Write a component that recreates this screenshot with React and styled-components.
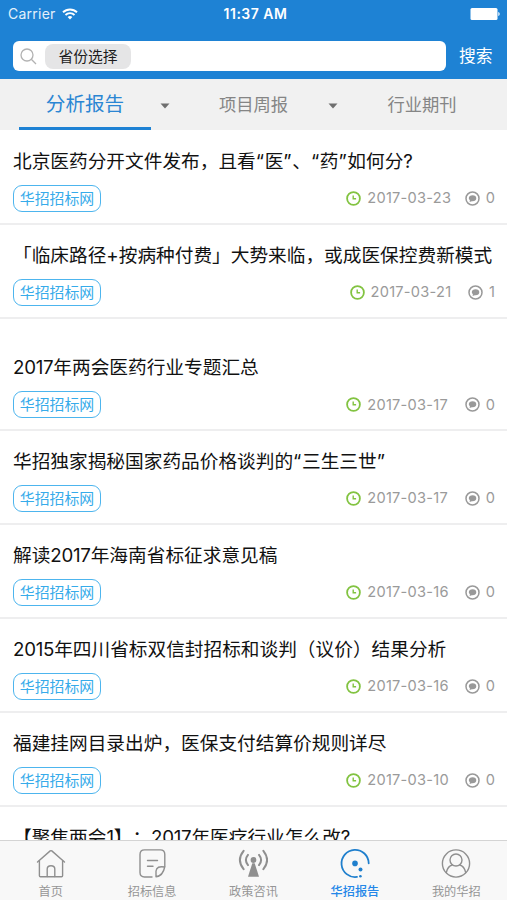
import React from 'react';
import styled, { createGlobalStyle } from 'styled-components';

const GlobalStyle = createGlobalStyle`
  * { box-sizing: border-box; }
  html, body { margin: 0; padding: 0; }
  body {
    font-family: Inter, "Noto Sans CJK SC", sans-serif;
    background: #fff;
    overflow: hidden;
  }
  svg { display: block; flex: none; }
`;

const Screen = styled.div`
  width: 507px;
  height: 900px;
  display: flex;
  flex-direction: column;
  overflow: hidden;
  background: #fff;
`;

const Header = styled.header`
  flex: none;
  height: 79px;
  background: #1e82d4;
  color: #fff;
`;

const StatusBar = styled.div`
  height: 28px;
  padding: 0 7px 0 8px;
  display: grid;
  grid-template-columns: 1fr auto 1fr;
  align-items: center;
  line-height: 28px;
`;

const Carrier = styled.div`
  display: flex;
  align-items: center;
  gap: 6px;
  font-size: 14px;
  letter-spacing: 0.25px;
  color: #e3f0fb;
`;

const Clock = styled.div`
  font-size: 14px;
  font-weight: 600;
  letter-spacing: 0.5px;
  padding-left: 3px;
`;

const BatterySlot = styled.div`
  justify-self: end;
`;

const SearchRow = styled.div`
  display: flex;
  align-items: center;
  height: 30px;
  margin-top: 13px;
  padding: 0 13px;
`;

const SearchField = styled.div`
  display: flex;
  align-items: center;
  gap: 8px;
  width: 433px;
  height: 30px;
  padding-left: 7px;
  border-radius: 6px;
  background: #fff;
`;

const Province = styled.div`
  width: 86px;
  height: 25px;
  border-radius: 8px;
  background: #e5e5e6;
  color: #1c1c1c;
  font-size: 14.8px;
  line-height: 26px;
  text-align: center;
`;

const SearchButton = styled.div`
  margin-left: 13px;
  font-size: 16.8px;
  line-height: 32px;
  white-space: nowrap;
`;

const Tabs = styled.nav`
  flex: none;
  display: flex;
  height: 51px;
  padding-left: 19px;
  background: #f1f1f1;
`;

const Tab = styled.div`
  flex: none;
  width: 132px;
  height: 51px;
  margin-right: 36.5px;
  text-align: center;
  line-height: 51px;
  font-size: ${(p) => (p.$active ? 19.6 : 17.3)}px;
  color: ${(p) => (p.$active ? '#2b86d3' : '#858585')};
  border-bottom: 3px solid ${(p) => (p.$active ? '#1e82d4' : 'transparent')};
  position: relative;
`;

const Caret = styled.svg`
  position: absolute;
  left: 140.5px;
  top: 24px;
`;

const List = styled.main`
  flex: 1;
  min-height: 0;
  padding-top: 1px;
  overflow: hidden;
`;

const Row = styled.article`
  height: ${(p) => (p.$spaced ? 112 : 94)}px;
  padding: ${(p) => (p.$spaced ? 35 : 16.5)}px 12px 0 13px;
  border-bottom: 2px solid #eeeeef;
`;

const Title = styled.h2`
  margin: 0;
  height: 28px;
  line-height: 28px;
  font-size: 18.68px;
  font-weight: 400;
  color: #111;
  white-space: nowrap;
  font-kerning: none;
  text-spacing-trim: space-all;
  font-feature-settings: "kern" 0, "calt" 0, "chws" 0;
`;

const Latin = styled.span`
  letter-spacing: ${(p) => p.$track || 0}px;
`;

const Meta = styled.div`
  display: flex;
  align-items: center;
  justify-content: space-between;
  height: 27px;
  margin-top: 9px;
`;

const Tag = styled.span`
  width: 88px;
  height: 27px;
  border: 1.5px solid #4db5ee;
  border-radius: 9px;
  color: #36abea;
  font-size: 14.9px;
  line-height: 26px;
  text-align: center;
`;

const Info = styled.div`
  display: flex;
  align-items: center;
  font-size: 14.6px;
  color: #9a9a9a;
  white-space: nowrap;
`;

const DateText = styled.span`
  width: 84px;
  margin: 0 13.5px 0 6px;
  letter-spacing: 0.25px;
`;

const Count = styled.span`
  margin-left: 6px;
`;

const BottomBar = styled.nav`
  flex: none;
  display: grid;
  grid-template-columns: repeat(5, 1fr);
  height: 60px;
  background: #f8f8f8;
  border-top: 1px solid #d4d4d4;
`;

const NavItem = styled.div`
  display: flex;
  flex-direction: column;
  align-items: center;
  padding-top: 7px;
  font-size: 12.2px;
  line-height: 18px;
  font-weight: ${(p) => (p.$active ? 500 : 400)};
  color: ${(p) => (p.$active ? '#2487e8' : '#969696')};
  svg { margin-bottom: 4px; }
`;

const WifiIcon = () => (
  <svg width="16" height="12" viewBox="0 0 16 12" fill="none" stroke="#fff" strokeWidth="1.9">
    <path d="M1 4.3a10 10 0 0 1 14 0" />
    <path d="M3.5 7a6.3 6.3 0 0 1 9 0" />
    <path d="M5.6 9.1a3.5 3.5 0 0 1 4.8 0L8 11.6z" fill="#fff" stroke="none" />
  </svg>
);

const BatteryIcon = () => (
  <svg width="30" height="12" viewBox="0 0 30 12" fill="#fff">
    <rect x=".5" width="27" height="12" rx="1.5" />
    <path d="M28.300 4c1.800.5 1.800 3.500 0 4z" />
  </svg>
);

const SearchIcon = () => (
  <svg width="17" height="17" viewBox="0 0 17 17" fill="none" stroke="#b2b2b2" strokeWidth="1.3">
    <circle cx="7" cy="7" r="6" />
    <path d="M11.300 11.300 16 16" />
  </svg>
);

const ClockIcon = () => (
  <svg width="15" height="15" viewBox="0 0 15 15" fill="none" stroke="#82c341">
    <circle cx="7.500" cy="7.500" r="6.400" strokeWidth="1.8" />
    <path d="M7.200 4.500v3.300h2.900" strokeWidth="1.4" />
  </svg>
);

const CommentIcon = () => (
  <svg width="15" height="15" viewBox="0 0 15 15" fill="none" stroke="#999">
    <circle cx="7.500" cy="7.500" r="6.500" strokeWidth="1.5" />
    <path d="M7.600 4.300c2.200 0 3.700 1.300 3.700 3s-1.500 3-3.700 3h-.8L4.600 10.900l.3-1.600C4.200 8.700 3.800 8 3.800 7.300c0-1.700 1.600-3 3.800-3z" fill="#999" stroke="none" />
  </svg>
);

const NavIcon = ({ children, color = '#8f8f8f' }) => (
  <svg width="30" height="31" viewBox="0 0 30 31" fill="none" stroke={color} strokeWidth="1.4" strokeLinecap="round" strokeLinejoin="round">
    {children}
  </svg>
);

const HomeIcon = () => (
  <NavIcon>
    <path d="M1.500 14 14.200 2.900q.8-.6 1.600 0L28.500 14" />
    <path d="M3.400 12.700v15q0 1.100 1.100 1.100h21q1.100 0 1.100-1.100v-15" />
    <path d="M11.200 28.500v-7.400q0-3.400 3.800-3.400t3.800 3.400V28.500" />
  </NavIcon>
);

const NoteIcon = () => (
  <NavIcon>
    <path d="M15 29H7.500Q3 29 3 24.500V6.500q0-4.600 4.500-4.600h15.800q4.500 0 4.500 4.600v12" />
    <path d="M27.700 19q-8-1.500-8.700 4v5.700q7-.8 8.700-9.700z" />
    <path d="M10.500 12.500h10M10.500 18.200h5.500" />
  </NavIcon>
);

const BroadcastIcon = () => (
  <NavIcon>
    <g strokeWidth="2">
      <path d="M5.600 2.800q-7.400 9.200 0 18.400M10 6.900q-4.200 5.100 0 10.200M25.400 2.800q7.400 9.200 0 18.400M21 6.900q4.200 5.100 0 10.200" />
    </g>
    <circle cx="15.500" cy="12" r="2.900" fill="#8f8f8f" stroke="none" />
    <path d="M14.300 15.200h2.400L21 28.700H10z" fill="#8f8f8f" stroke="none" />
  </NavIcon>
);

const ReportIcon = () => (
  <NavIcon color="#1f7fcd">
    <path d="M28.700 15.300A13.600 13.600 0 1 0 17 28.900" strokeWidth="1.800" />
    <circle cx="15" cy="15.400" r="2.800" fill="#1f7fcd" stroke="none" />
    <circle cx="20.500" cy="21.500" r="2" fill="#1f7fcd" stroke="none" />
    <circle cx="20.400" cy="28.200" r="1.300" fill="#1f7fcd" stroke="none" />
  </NavIcon>
);

const ProfileIcon = () => (
  <NavIcon>
    <circle cx="15" cy="15.500" r="13.600" />
    <circle cx="15" cy="12" r="6" />
    <path d="M5.300 24.500q1.500-6.500 6-7.500M18.700 17q4.500 1 6 7.500" />
  </NavIcon>
);

const TAB_ITEMS = ['分析报告', '项目周报', '行业期刊'];

const ARTICLES = [
  { title: '北京医药分开文件发布，且看“医”、“药”如何分?', date: '2017-03-23', count: 0 },
  { title: '「临床路径+按病种付费」大势来临，或成医保控费新模式', date: '2017-03-21', count: 1 },
  { title: '2017年两会医药行业专题汇总', date: '2017-03-17', count: 0, spaced: true },
  { title: '华招独家揭秘国家药品价格谈判的“三生三世”', date: '2017-03-17', count: 0 },
  { title: '解读2017年海南省标征求意见稿', date: '2017-03-16', count: 0 },
  { title: '2015年四川省标双信封招标和谈判（议价）结果分析', date: '2017-03-16', count: 0 },
  { title: '福建挂网目录出炉，医保支付结算价规则详尽', date: '2017-03-10', count: 0 },
  { title: '【聚焦两会1】：2017年医疗行业怎么改?', date: '2017-03-10', count: 0 },
];

const NAV_ITEMS = [
  { label: '首页', Icon: HomeIcon },
  { label: '招标信息', Icon: NoteIcon },
  { label: '政策咨讯', Icon: BroadcastIcon },
  { label: '华招报告', Icon: ReportIcon, active: true },
  { label: '我的华招', Icon: ProfileIcon },
];

const TRACKING = { digits: -0.25, quote: 0.65 };

const TitleText = ({ text }) =>
  text.split(/(\d+|[“”])/).map((part, i) => {
    if (/^\d/.test(part)) return <Latin key={i} $track={TRACKING.digits}>{part}</Latin>;
    if (/^[“”]/.test(part)) return <Latin key={i} $track={TRACKING.quote}>{part}</Latin>;
    return part;
  });

export default function App() {
  return (
    <Screen>
      <GlobalStyle />
      <Header>
        <StatusBar>
          <Carrier>Carrier <WifiIcon /></Carrier>
          <Clock>11:37 AM</Clock>
          <BatterySlot><BatteryIcon /></BatterySlot>
        </StatusBar>
        <SearchRow>
          <SearchField>
            <SearchIcon />
            <Province>省份选择</Province>
          </SearchField>
          <SearchButton>搜索</SearchButton>
        </SearchRow>
      </Header>
      <Tabs>
        {TAB_ITEMS.map((label, i) => (
          <Tab key={label} $active={i === 0}>
            {label}
            {i < 2 && (
              <Caret width="10" height="6" viewBox="0 0 10 6">
                <path d="M.5.500h9L5 5.500z" fill="#6f6f6f" />
              </Caret>
            )}
          </Tab>
        ))}
      </Tabs>
      <List>
        {ARTICLES.map((a) => (
          <Row key={a.title} $spaced={a.spaced}>
            <Title><TitleText text={a.title} /></Title>
            <Meta>
              <Tag>华招招标网</Tag>
              <Info>
                <ClockIcon />
                <DateText>{a.date}</DateText>
                <CommentIcon />
                <Count>{a.count}</Count>
              </Info>
            </Meta>
          </Row>
        ))}
      </List>
      <BottomBar>
        {NAV_ITEMS.map(({ label, Icon, active }) => (
          <NavItem key={label} $active={active}>
            <Icon />
            {label}
          </NavItem>
        ))}
      </BottomBar>
    </Screen>
  );
}
